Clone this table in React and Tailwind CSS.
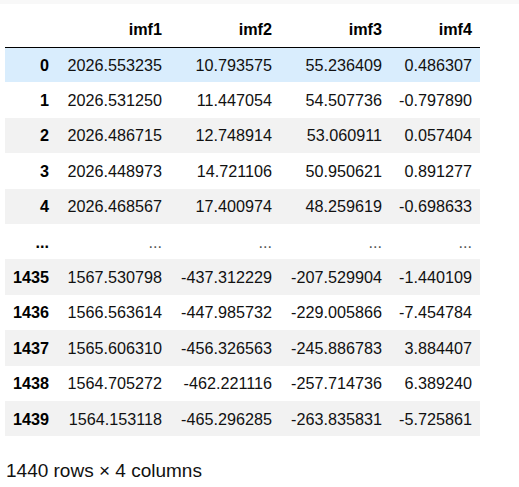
import React from "react";

const rows = [
  ["0", "2026.553235", "10.793575", "55.236409", "0.486307"],
  ["1", "2026.531250", "11.447054", "54.507736", "-0.797890"],
  ["2", "2026.486715", "12.748914", "53.060911", "0.057404"],
  ["3", "2026.448973", "14.721106", "50.950621", "0.891277"],
  ["4", "2026.468567", "17.400974", "48.259619", "-0.698633"],
  ["...", "...", "...", "...", "..."],
  ["1435", "1567.530798", "-437.312229", "-207.529904", "-1.440109"],
  ["1436", "1566.563614", "-447.985732", "-229.005866", "-7.454784"],
  ["1437", "1565.606310", "-456.326563", "-245.886783", "3.884407"],
  ["1438", "1564.705272", "-462.221116", "-257.714736", "6.389240"],
  ["1439", "1564.153118", "-465.296285", "-263.835831", "-5.725861"],
];

export default function App() {
  return (
    <div className="w-[519px] h-[487px] bg-white text-black" style={{ fontFamily: '"Liberation Sans", Arial, sans-serif' }}>
      <div className="h-[4px] bg-[#f8f8f8]" />
      <div className="pl-[5px] pt-[8px]">
        <table className="border-collapse table-fixed text-[16.2px] leading-none">
          <colgroup>
            <col className="w-[52px]" />
            <col className="w-[113px]" />
            <col className="w-[110px]" />
            <col className="w-[110px]" />
            <col className="w-[90px]" />
          </colgroup>
          <thead>
            <tr className="h-[35px] border-b border-black">
              <th className="px-[8px]"></th>
              <th className="px-[8px] text-right font-bold">imf1</th>
              <th className="px-[8px] text-right font-bold">imf2</th>
              <th className="px-[8px] text-right font-bold">imf3</th>
              <th className="px-[8px] text-right font-bold">imf4</th>
            </tr>
          </thead>
          <tbody>
            {rows.map((r, i) => {
              const bg = i === 0 ? "bg-[#d9edfd]" : i % 2 === 0 ? "bg-[#f2f2f2]" : "bg-white";
              return (
                <tr key={i} className={`h-[35.4px] ${bg}`}>
                  <th className="px-[8px] text-right font-bold">{r[0]}</th>
                  {r.slice(1).map((c, j) => (
                    <td key={j} className={`px-[8px] text-right whitespace-nowrap ${c === "..." ? "text-[#555]" : "text-[#111]"}`}>{c}</td>
                  ))}
                </tr>
              );
            })}
          </tbody>
        </table>
        <div className="mt-[24px] pl-[1px] text-[19px] leading-[22px] text-[#111]">1440 rows × 4 columns</div>
      </div>
    </div>
  );
}
